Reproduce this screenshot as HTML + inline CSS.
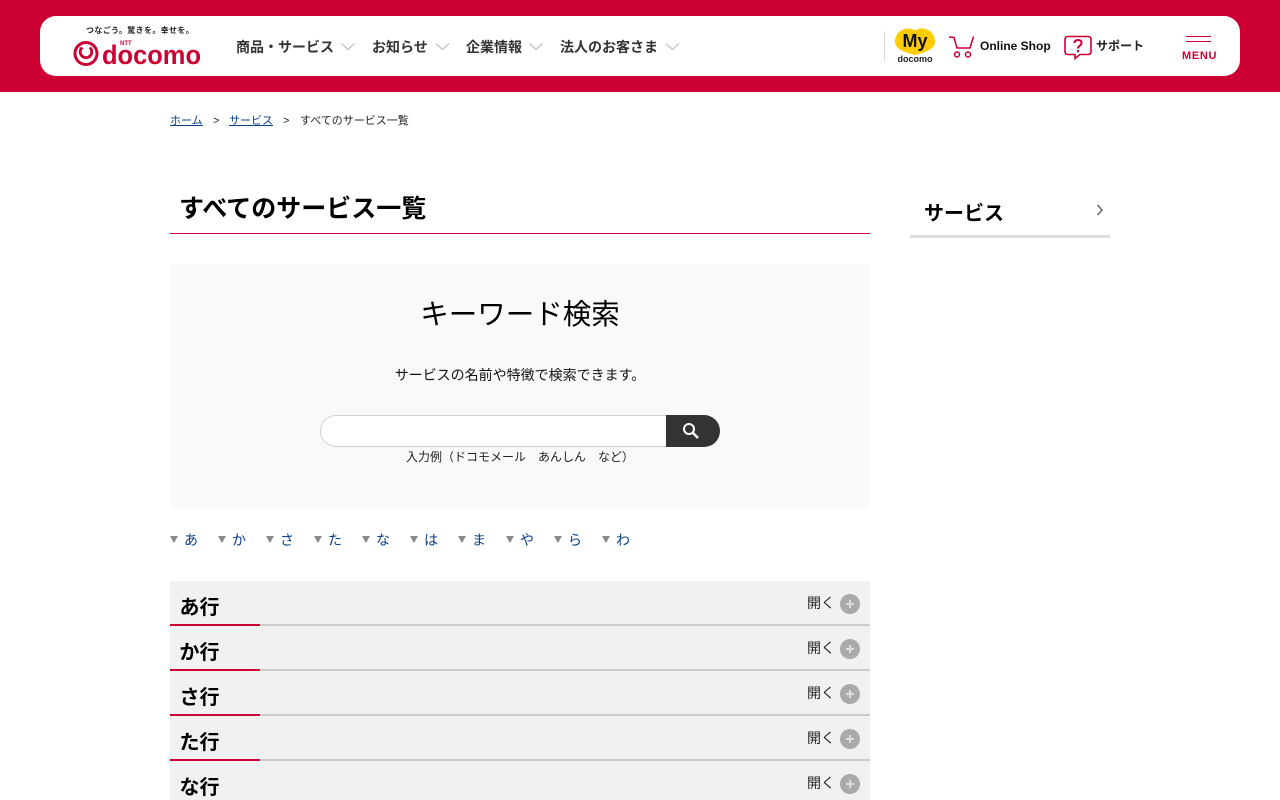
<!DOCTYPE html>
<html lang="ja"><head><meta charset="utf-8"><title>すべてのサービス一覧</title>
<style>
*{box-sizing:border-box}
html,body{margin:0;padding:0;width:1280px;height:800px;overflow:hidden;background:#fff}
body{position:relative;font-family:"Liberation Sans","Noto Sans CJK JP",sans-serif;color:#000}
.a{position:absolute;white-space:nowrap}
.nav{font-size:14px;font-weight:bold;color:#333;top:39px;line-height:16px}
.row{position:absolute;left:170px;width:700px;height:45px;background:#f1f1f1;border-bottom:2px solid #ccc}
.row:after{content:"";position:absolute;left:0;bottom:-2px;width:90px;height:2px;background:#cc0033}
.row b{position:absolute;left:9.500px;top:13px;font-size:20px;line-height:28px}
.row span{position:absolute;left:637px;top:12px;font-size:14px;line-height:20px;color:#222}
.row i{position:absolute;left:670px;top:13px;width:20px;height:20px;border-radius:50%;background:#aaa}
.row i:before{content:"";position:absolute;left:6px;top:9px;width:8px;height:2px;background:#ddd}
.row i:after{content:"";position:absolute;left:9px;top:6px;width:2px;height:8px;background:#ddd}
.k{position:absolute;top:531px;font-size:14px;line-height:18px;color:#0b3f87}
.k:before{content:"";position:absolute;left:-14px;top:5px;border:4.500px solid transparent;border-top:7px solid #888;border-bottom:0}
</style></head><body>
<div class="a" style="left:0;top:0;width:1280px;height:92px;background:#cc0033"></div>
<div class="a" style="left:40px;top:16px;width:1200px;height:60px;background:#fff;border-radius:16px"></div>

<div class="a" style="left:86px;top:26px;font-size:8px;line-height:10px;font-weight:bold;letter-spacing:.35px;color:#222">つなごう。驚きを。幸せを。</div>
<svg class="a" style="left:73px;top:41px" width="128" height="26" viewBox="0 0 128 26">
<circle cx="13" cy="12.500" r="11" fill="none" stroke="#cc0033" stroke-width="3"/>
<path d="M9.200 6.500a5.800 5.800 0 1 0 7.600 0" fill="none" stroke="#cc0033" stroke-width="2.800"/>
<text x="29" y="23" font-family="Liberation Sans" font-weight="bold" font-size="27" fill="#cc0033" textLength="99" lengthAdjust="spacingAndGlyphs">docomo</text>
</svg>
<div class="a" style="left:120px;top:41px;font-size:6px;line-height:6px;font-weight:bold;color:#cc0033">NTT</div>

<div class="a nav" style="left:236px">商品・サービス</div>
<div class="a nav" style="left:372px">お知らせ</div>
<div class="a nav" style="left:466px">企業情報</div>
<div class="a nav" style="left:560px">法人のお客さま</div>
<svg class="a" style="left:340px;top:42px" width="340" height="10" fill="none" stroke="#c8c8c8" stroke-width="1.500">
<path d="M1.500 1.500l6.500 6 6.500-6M96 1.500l6.500 6 6.500-6M189.500 1.500l6.500 6 6.500-6M326 1.500l6.500 6 6.500-6"/></svg>

<div class="a" style="left:884px;top:31px;width:1px;height:31px;background:#ddd"></div>
<svg class="a" style="left:895px;top:28px" width="40" height="27"><path d="M20 2.500A13 13 0 0 1 40 13c0 8-8 11-20 14C8 24 0 21 0 13A13 13 0 0 1 20 2.500z" fill="#ffcc00"/></svg>
<div class="a" style="left:895px;top:31px;width:40px;text-align:center;font-size:18px;line-height:20px;font-weight:bold;color:#111">My</div>
<div class="a" style="left:895px;top:54px;width:40px;text-align:center;font-size:9px;line-height:10px;font-weight:bold;color:#222">docomo</div>
<svg class="a" style="left:948px;top:36px" width="27" height="23" fill="none" stroke="#cc0033" stroke-width="1.500">
<path d="M1 1l5 .5 3 10.500h13l3.500-11.500"/><circle cx="9" cy="18.500" r="2.500"/><circle cx="20" cy="18.500" r="2.500"/></svg>
<div class="a" style="left:980px;top:38px;font-size:12px;line-height:16px;font-weight:bold;color:#111">Online Shop</div>
<svg class="a" style="left:1064px;top:35px" width="28" height="25" fill="none" stroke="#cc0033" stroke-width="1.600">
<path d="M4 1.500h20q3 0 3 3v12q0 3-3 3h-8l-5 4v-4H4q-3 0-3-3v-12q0-3 3-3z"/>
<path d="M10.500 8q0-3 3.500-3t3.500 3q0 1.500-2 3-1.500 1-1.500 2.500" stroke-width="2"/><path d="M14 15v2.300" stroke-width="2"/></svg>
<div class="a" style="left:1096px;top:38px;font-size:12px;line-height:16px;font-weight:bold;color:#222">サポート</div>
<div class="a" style="left:1186px;top:36px;width:25px;height:1px;background:#cc0033"></div>
<div class="a" style="left:1186px;top:41px;width:25px;height:1px;background:#cc0033"></div>
<div class="a" style="left:1182px;top:49px;font-size:11px;line-height:14px;font-weight:bold;letter-spacing:.7px;color:#cc0033">MENU</div>

<div class="a" style="left:170px;top:114px;font-size:11px;line-height:14px;color:#222"><span style="color:#0b3f87;text-decoration:underline">ホーム</span></div>
<div class="a" style="left:213px;top:114px;font-size:11px;line-height:14px;color:#222">&gt;</div>
<div class="a" style="left:229px;top:114px;font-size:11px;line-height:14px;color:#0b3f87;text-decoration:underline">サービス</div>
<div class="a" style="left:283px;top:114px;font-size:11px;line-height:14px;color:#222">&gt;</div>
<div class="a" style="left:300px;top:114px;font-size:11px;line-height:14px;color:#222">すべてのサービス一覧</div>

<div class="a" style="left:179px;top:193px;font-size:25px;line-height:32px;font-weight:bold">すべてのサービス一覧</div>
<div class="a" style="left:170px;top:233px;width:700px;height:1px;background:#cc0033"></div>

<div class="a" style="left:924px;top:201px;font-size:20px;line-height:26px;font-weight:bold">サービス</div>
<svg class="a" style="left:1096px;top:204px" width="10" height="13" fill="none" stroke="#666" stroke-width="1.500"><path d="M1.500 1l4.500 5-4.500 5"/></svg>
<div class="a" style="left:910px;top:235px;width:200px;height:3px;background:#ddd"></div>

<div class="a" style="left:170px;top:264px;width:700px;height:244px;background:#f9f9f9"></div>
<div class="a" style="left:170px;top:295px;width:700px;text-align:center;font-size:28.500px;line-height:40px">キーワード検索</div>
<div class="a" style="left:170px;top:366px;width:700px;text-align:center;font-size:14px;line-height:18px;color:#111">サービスの名前や特徴で検索できます。</div>
<div class="a" style="left:320px;top:415px;width:347px;height:32px;background:#fff;border:1px solid #d0d0d0;border-right:0;border-radius:16px 0 0 16px"></div>
<div class="a" style="left:666px;top:415px;width:54px;height:32px;background:#333;border-radius:0 16px 16px 0"></div>
<svg class="a" style="left:681px;top:421px" width="20" height="20" fill="none" stroke="#fff"><circle cx="8" cy="8" r="5" stroke-width="2"/><path d="M11.500 11.500l5.500 5.500" stroke-width="2.600"/></svg>
<div class="a" style="left:170px;top:449px;width:700px;text-align:center;font-size:12px;line-height:16px;color:#222">入力例（ドコモメール　あんしん　など）</div>

<span class="k" style="left:184px">あ</span><span class="k" style="left:232px">か</span><span class="k" style="left:280px">さ</span><span class="k" style="left:328px">た</span><span class="k" style="left:376px">な</span><span class="k" style="left:424px">は</span><span class="k" style="left:472px">ま</span><span class="k" style="left:520px">や</span><span class="k" style="left:568px">ら</span><span class="k" style="left:616px">わ</span>

<div class="row" style="top:581px"><b>あ行</b><span>開く</span><i></i></div>
<div class="row" style="top:626px"><b>か行</b><span>開く</span><i></i></div>
<div class="row" style="top:671px"><b>さ行</b><span>開く</span><i></i></div>
<div class="row" style="top:716px"><b>た行</b><span>開く</span><i></i></div>
<div class="row" style="top:761px"><b>な行</b><span>開く</span><i></i></div>
</body></html>
